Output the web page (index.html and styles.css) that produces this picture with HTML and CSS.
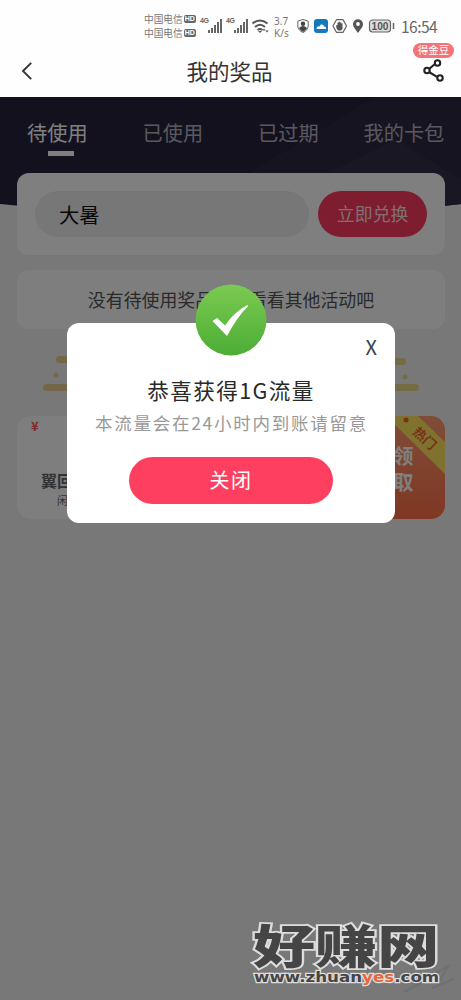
FILE: index.html
```html
<!DOCTYPE html>
<html lang="zh-CN">
<head>
<meta charset="utf-8">
<title>我的奖品</title>
<link rel="stylesheet" href="styles.css">
</head>
<body>
<div class="phone">
  <header class="top">
    <div class="status">
      <div class="carriers"><div>中国电信<b>HD</b></div><div>中国电信<b>HD</b></div></div>
      <svg class="signals" width="72" height="18" viewBox="0 0 72 18">
        <g fill="#666"><text x="0" y="6" class="fourg">4G</text><path d="M8 13h2v3H8zM11 11h2v5h-2zM14 8h2v8h-2zM17 5h2v11h-2zM20 2h2v14h-2z"/>
        <text x="26" y="6" class="fourg">4G</text><path d="M34 13h2v3h-2zM37 11h2v5h-2zM40 8h2v8h-2zM43 5h2v11h-2zM46 2h2v14h-2z"/></g>
        <g fill="none" stroke="#555" stroke-width="1.9"><path d="M52.500 6.500Q60 .5 67.500 6.500M55 10Q60 5.500 65 10M57.500 13Q60 11 62.500 13"/></g>
        <path d="M58 14h4l-2 2zM64 11.500l1.500 2h-3zM67 15.500l-1.700-2h3.400z" fill="#555"/>
      </svg>
      <div class="speed"><div>3.7</div><div>K/s</div></div>
      <svg class="sysicons" width="100" height="18" viewBox="0 0 100 18">
        <path d="M6 2.500L11.200 4v5c0 3-2 5-5.200 6.500C2.800 14 .8 12 .8 9V4z" fill="#fff" stroke="#666" stroke-width="1"/>
        <circle cx="6" cy="6.700" r="2.200" fill="#444"/><path d="M2 11q4-4 8 0-1 2.500-4 4-3-1.500-4-4" fill="#444"/>
        <rect x="17" y="2" width="14" height="14" rx="3" fill="#1479bd"/><path d="M19.500 12c0-2 1.500-3 3-2.500 1-3 4-2.500 4.500 0 2 0 2.500 1.500 2 2.500z" fill="#fff"/>
        <path d="M39.500 2.700h6.500l3.500 6.300-3.500 6.300h-6.500L36 9z" fill="#fff" stroke="#666" stroke-width="1.200"/><path d="M39.300 8h1.200V5.500h1.200V4.700h1.300v.8h1.300v1h1.200V12l-1.500 1.500h-3L39.300 11z" fill="#555"/>
        <path d="M61 2.300a5 5 0 0 1 5 5c0 3-2.500 5-5 8.700-2.500-3.700-5-5.700-5-8.700a5 5 0 0 1 5-5z" fill="#555"/><circle cx="61" cy="7" r="1.900" fill="#fff"/>
        <rect x="72.500" y="3" width="21" height="12" rx="3" fill="#ddd" stroke="#666" stroke-width="1.200"/><path d="M96.500 6v6" stroke="#666" stroke-width="1.500"/>
        <text x="74.500" y="13" textLength="17" lengthAdjust="spacingAndGlyphs" class="level">100</text>
      </svg>
      <span class="clock">16:54</span>
    </div>
    <div class="nav">
      <svg class="back" width="12" height="20" viewBox="0 0 12 20"><path d="M10.200 1.800L2 10l8.200 8.200" fill="none" stroke="#333" stroke-width="1.900"/></svg>
      <h1>我的奖品</h1>
      <svg class="share" width="22" height="24" viewBox="0 0 22 24"><g fill="none" stroke="#222" stroke-width="2.100"><path d="M12 5L6 10M6 13l8 4.800"/><circle cx="14.500" cy="4" r="2.700"/><circle cx="4" cy="11.500" r="2.700"/><circle cx="17" cy="19" r="2.700"/></g></svg>
      <span class="beans">得金豆</span>
    </div>
  </header>
  <main class="content">
    <svg class="banner" width="461" height="112" viewBox="0 0 461 112"><path d="M0 0H461V107Q231 130 0 107z" fill="#29233f"/><path d="M375 0H461V107L420 112H190z" fill="#2e2945"/><path d="M330 75L395 43 461 82V107L250 112z" fill="#332e48"/></svg>
    <nav class="tabs"><span class="active">待使用</span><span>已使用</span><span>已过期</span><span>我的卡包</span></nav>
    <section class="redeem"><div class="code">大暑</div><div class="exchange">立即兑换</div></section>
    <section class="empty">没有待使用奖品，去看看其他活动吧</section>
    <svg class="clouds" width="376" height="36" viewBox="0 0 376 36"><g fill="#e8cf91"><rect x="13" width="60" height="7" rx="3.500"/><circle cx="13" cy="19" r="2.500"/><rect y="28" width="80" height="7" rx="3.500"/></g><g fill="#e8d98b"><rect x="300" y="2" width="63" height="7" rx="3.500"/><circle cx="362" cy="21" r="2.500"/><rect x="296" y="28" width="80" height="7" rx="3.500"/></g></svg>
    <section class="coupon">
      <div class="offer"><i>¥</i><strong>翼回</strong><small>闲</small></div>
      <div class="claim">
        <svg width="85" height="103" viewBox="0 0 85 103"><defs><linearGradient id="orange" x1="0" y1="0" x2="0" y2="1"><stop stop-color="#ff9a70"/><stop offset="1" stop-color="#ff7048"/></linearGradient></defs><path d="M0 0H85V103H0z" fill="url(#orange)"/><path d="M26 0H58L85 26V58z" fill="#ffe55c"/><circle cx="46" cy="4" r="2.500" fill="#f06030"/><text transform="translate(52 17) rotate(43)" class="hot">热门</text></svg>
        <b>领取</b>
      </div>
    </section>
  </main>
  <div class="mask">
    <div class="dialog">
      <svg class="success" width="72" height="72" viewBox="0 0 72 72"><defs><linearGradient id="green" x1="0" y1="0" x2="0" y2="1"><stop stop-color="#7cca52"/><stop offset="1" stop-color="#4cad35"/></linearGradient></defs><circle cx="36" cy="36" r="35.500" fill="url(#green)"/><path d="M17.500 37L22 34l8 7.500Q39 28 52.500 21q1 0 0 1.700Q42 33 32 52z" fill="#fff"/></svg>
      <span class="dismiss">X</span>
      <h2>恭喜获得1G流量</h2>
      <p>本流量会在24小时内到账请留意</p>
      <div class="close">关闭</div>
    </div>
  </div>
  <div class="watermark">
    <svg class="stamp" width="60" height="34" viewBox="0 0 60 34"><path d="M2 28L46 2 36 20l-8-5zM30 24l22-9" fill="none" stroke="#707070" stroke-width="2"/></svg>
    <div class="brand">好赚网</div>
    <div class="site">www.zhuan<em>yes</em>.com</div>
  </div>
</div>
</body>
</html>
```
FILE: styles.css
```css
* { box-sizing: border-box; }
body { margin: 0; font-family: "Noto Sans CJK SC", sans-serif; }
.phone { position: relative; width: 461px; height: 1000px; overflow: hidden; background: #f0f0f0; }
.top { height: 97px; background: #fefefe; }
.status { height: 48px; padding: 13px 0 0 144px; display: flex; align-items: flex-start; color: #777; }
.carriers { width: 56px; font-size: 9.7px; line-height: 14px; white-space: nowrap; margin-top: -1px; }
.carriers div { display: flex; align-items: center; }
.carriers b { margin-left: 1px; width: 12px; height: 8px; border-radius: 2px; background: #666; color: #fff; font: bold 7px/8px "Liberation Sans", sans-serif; text-align: center; }
.signals { margin: 4px 0 0; flex: none; }
.fourg { font: bold 7px "Liberation Sans", sans-serif; letter-spacing: -.5px; }
.speed { width: 25px; padding-left: 2px; font: 10px/12px "Noto Sans", sans-serif; margin-top: 2px; }
.sysicons { margin-top: 4px; flex: none; }
.level { font: bold 11px "Liberation Sans", sans-serif; fill: #555; }
.clock { margin: 3px 0 0 4px; font: 15.5px/21px "Noto Sans CJK SC", sans-serif; letter-spacing: -.5px; color: #666; }
.nav { position: relative; height: 49px; display: flex; align-items: center; justify-content: space-between; padding: 0 16px 4px 21px; }
.nav h1 { margin: 0 0 0 3px; font-size: 21.5px; line-height: 30px; font-weight: 400; color: #333; }
.share { margin-top: 1px; }
.beans { position: absolute; right: 7px; top: -5px; width: 41px; height: 15px; border-radius: 8px; background: #f37377; color: #fff; font-size: 10.5px; line-height: 14px; text-align: center; }
.content { position: relative; height: 903px; padding: 0 16px 0 17px; }
.banner { position: absolute; left: 0; top: 0; }
.tabs { position: relative; height: 76px; padding: 20px 0 0 10px; display: flex; font-size: 20.2px; line-height: 32px; color: #b4b1bb; white-space: nowrap; }
.tabs span { width: 115.5px; height: 40px; flex: none; }
.tabs span:last-child { margin-left: -10px; }
.tabs .active { color: #fff; }
.tabs .active::after { content: ""; display: block; width: 26px; height: 5px; margin: 2px 0 0 21px; background: #fff; }
.redeem { position: relative; height: 82px; padding: 18px; border-radius: 12px; background: #fff; display: flex; gap: 9px; }
.code { width: 275px; height: 46px; border-radius: 23px; background: #eee; padding-left: 24px; font-size: 20.3px; line-height: 46px; color: #111; }
.exchange { width: 109px; height: 46px; border-radius: 23px; background: #ff3b60; color: #ffdfe2; font-size: 17.9px; line-height: 44px; text-align: center; }
.empty { margin-top: 15px; height: 59px; border-radius: 12px; background: #fcfcfc; text-align: center; font-size: 17.9px; line-height: 58px; color: #555; }
.clouds { display: block; margin: 27px 0 0 26px; }
.coupon { margin-top: 24px; height: 103px; border-radius: 14px; overflow: hidden; background: #fcfcfc; display: flex; justify-content: space-between; }
.offer { padding-left: 14px; display: flex; flex-direction: column; color: #666; }
.offer i { font: bold 13px/20px "Noto Sans CJK SC", sans-serif; color: #f55; }
.offer strong { margin: 32px 0 0 10px; font-size: 16px; line-height: 24px; }
.offer small { margin-left: 26px; font-size: 11px; line-height: 16px; }
.claim { position: relative; width: 85px; height: 103px; }
.hot { font: bold 13px "Noto Sans CJK SC", sans-serif; fill: #f06030; }
.claim b { position: absolute; left: 33px; top: 26px; width: 21px; font-size: 20.5px; line-height: 26px; color: #fff; word-break: break-all; }
.mask { position: absolute; inset: 97px 0 0; background: rgba(0,0,0,.5); padding: 226px 66px 0 67px; }
.dialog { position: relative; height: 200px; border-radius: 12px; background: #fff; display: flex; flex-direction: column; align-items: center; padding-top: 50px; }
.success { position: absolute; left: 128px; top: -39px; }
.dismiss { position: absolute; right: 18px; top: 10px; font: 20px/27px "Noto Sans CJK SC", sans-serif; color: #34424b; }
.dialog h2 { margin: 0; font-size: 21.6px; line-height: 34px; letter-spacing: 1.4px; font-weight: 400; color: #292929; white-space: nowrap; }
.dialog p { margin: 2px 0 0 1px; font-size: 17.5px; line-height: 28px; letter-spacing: 1.75px; color: #999; white-space: nowrap; }
.close { margin-top: 20px; width: 204px; height: 47px; border-radius: 24px; background: #ff3f60; color: #fff; font-size: 20px; line-height: 46px; letter-spacing: 1.5px; text-align: center; }
.watermark { position: absolute; left: 253px; top: 919px; width: 208px; height: 81px; color: #454545; white-space: nowrap; -webkit-text-stroke: 3.5px #ddd; paint-order: stroke; }
.brand { width: 138px; height: 50px; font-weight: 900; font-size: 46px; line-height: 48px; transform: scaleX(1.35); transform-origin: 0 0; }
.site { width: 170px; height: 15px; margin: 1px 0 0 1px; font: bold 14.5px/15px "DejaVu Sans", sans-serif; -webkit-text-stroke-width: 2.5px; transform: scaleX(1.15); transform-origin: 0 0; }
.site em { font-style: normal; color: #e5673b; }
.stamp { position: absolute; left: 149px; top: 45px; }
```
